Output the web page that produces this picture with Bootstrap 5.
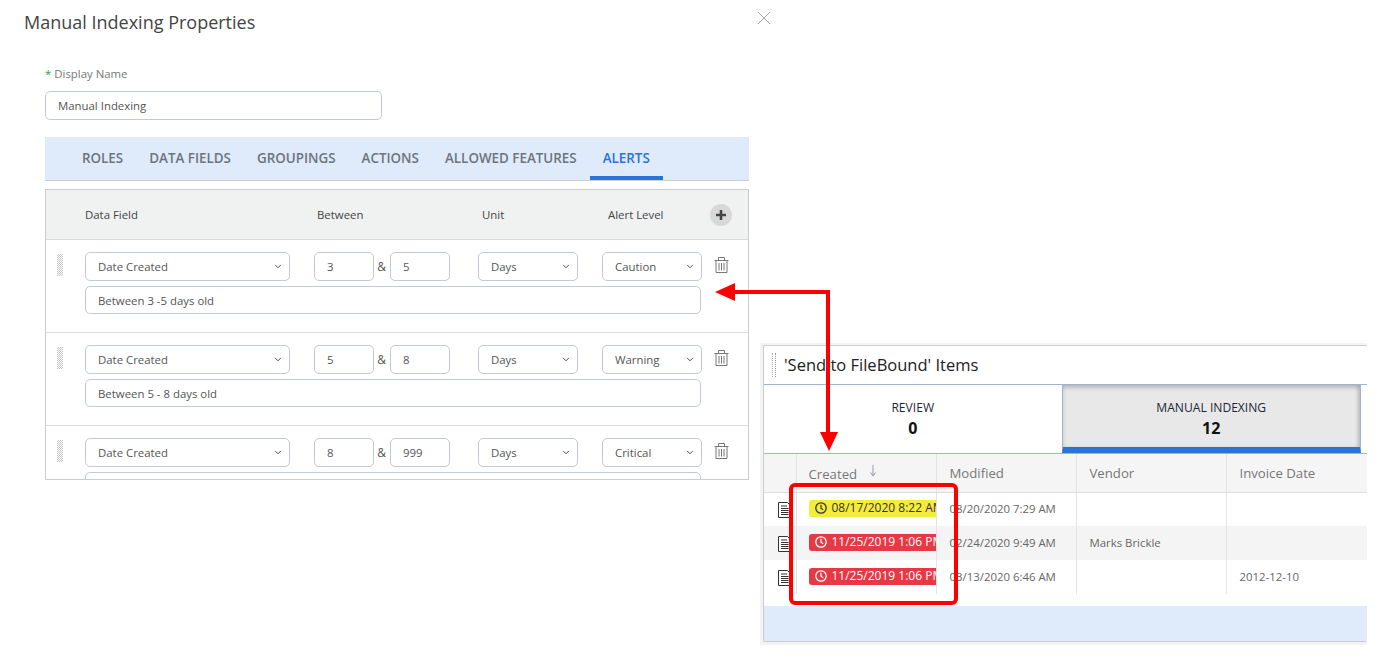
<!DOCTYPE html>
<html lang="en">
<head>
  <meta charset="UTF-8">
  <meta name="viewport" content="width=device-width, initial-scale=1">
  <title>Manual Indexing Properties</title>
  <link href="https://cdn.jsdelivr.net/npm/bootstrap@5.3.2/dist/css/bootstrap.min.css" rel="stylesheet">
  <style>
    body { font-family: "Open Sans", "Liberation Sans", sans-serif; font-size: 12px; color: #555; background: #fff; position: relative; height: 657px; overflow: hidden; }
    .left-pane { width: 760px; flex: none; }
    .dlg-head { height: 44px; padding-left: 24px; }
    .dlg-title { font-size: 18px; line-height: 44px; color: #444; margin: 0; font-weight: 400; }
    .dlg-close { margin: 11px -11px 0 0; }
    .dlg-body { padding-left: 45px; width: 749px; }
    .name-label { margin: 22px 0 9px; line-height: 16px; color: #777; font-size: 11.4px; }
    .name-label span { color: #2a9d4a; }
    .form-control.ctl, .form-select.ctl { font-size: 11.4px; color: #555; height: 29px; min-height: 0; padding: 0 12px; border-color: #c3cad6; border-radius: 5px; box-shadow: none; }
    .form-select.ctl { background-size: 8px 7px; background-position: right 7px center; padding-right: 20px; }
    .name-input { width: 337px; }
    .tab-bar { margin-top: 17px; height: 44px; background: #dfeafb; border-bottom: 1px solid #ccc; padding-left: 24px; }
    .tab-bar .nav-link { color: #6c757d; font-size: 13.4px; font-weight: 600; height: 43px; padding: 12px 13px 0; border-bottom: 4px solid transparent; line-height: 18px; border-radius: 0; }
    .tab-bar .nav-link.active { color: #2a74d8; border-bottom-color: #2a74d8; }
    .alert-grid { margin-top: 8px; height: 291px; border: 1px solid #ccc; overflow: hidden; }
    .alert-head { height: 50px; background: #f0f2f2; border-bottom: 1px solid #ddd; color: #444; font-size: 11.4px; }
    .hd-field { margin-left: 39px; width: 232px; }
    .hd-between { width: 165px; }
    .hd-unit { width: 126px; }
    .hd-level { width: 102px; }
    .plus-btn { width: 22px; height: 22px; border-radius: 50%; background: #d8d8d8; }
    .alert-row { height: 93px; border-bottom: 1px solid #ddd; padding-top: 12px; }
    .drag-col { width: 39px; flex: none; padding: 2px 0 0 11px; }
    .drag-grip { width: 6px; height: 22px; background: repeating-conic-gradient(#c4c4c4 0 25%, #fff 0 50%) 0 0 / 2px 2px; }
    .w-field { width: 205px; flex: none; }
    .w-num { width: 60px; flex: none; }
    .w-opt { width: 100px; flex: none; }
    .amp { width: 16px; text-align: center; flex: none; font-size: 12px; line-height: 29px; padding-right: 1px; }
    .gap-24 { margin-left: 24px; }
    .gap-28 { margin-left: 28px; }
    .trash { margin-left: 12px; margin-top: 5px; }
    .form-control.note-input { width: 616px; height: 28px; margin: 5px 0 0 39px; }
    .right-pane { width: 607px; height: 302px; margin-top: 343px; background: #f3f3f3; padding: 2px 0 3px 3px; flex: none; }
    .items-panel { height: 297px; background: #fff; border: 1px solid #ccc; border-right: 0; border-radius: 2px; overflow: hidden; display: flex; flex-direction: column; }
    .items-title { height: 38px; flex: none; padding-left: 8px; color: #222; font-size: 16.5px; gap: 8px; }
    .items-grip { width: 4px; height: 24px; border-left: 1px dotted #aaa; border-right: 1px dotted #a8a; }
    .count-tabs { height: 70px; flex: none; border-top: 1px solid #9db5d3; border-bottom: 1px solid #9db5d3; padding-right: 6px; }
    .count-tab { flex: 1 1 0; text-align: center; color: #1c2733; font-size: 12.1px; line-height: 16px; padding-top: 15px; }
    .count-tab b { display: block; font-size: 16px; line-height: 24px; color: #111; }
    .count-tab.on { background: #e8e8e8; border-left: 1px solid #9db5d3; border-right: 1px solid #9db5d3; border-bottom: 6px solid #2a74d8; box-shadow: inset 0 3px 4px rgba(0,0,0,.18), inset -3px 0 3px rgba(0,0,0,.1); }
    .item-table { table-layout: fixed; width: 603px; margin: 0; font-size: 11.4px; color: #666; }
    .item-table th, .item-table td { padding: 0 0 1px 13px; border-bottom: 0; border-right: 1px solid #e4e4e4; vertical-align: middle; white-space: nowrap; overflow: hidden; color: #666; background: transparent; box-shadow: none; }
    .item-table th { height: 38px; padding-top: 4px; background: #f5f5f5; border-bottom: 1px solid #ddd; font-weight: 400; font-size: 13.2px; color: #777; }
    .item-table td { height: 34px; }
    .item-table th:nth-child(2), .item-table td:nth-child(2) { padding-left: 12px; padding-bottom: 0; }
    .item-table tr.alt td { background: #f4f4f4; }
    .item-table td.doc-cell { padding: 0 0 0 14px; }
    .item-table td:last-child, .item-table th:last-child { border-right: 0; }
    .alert-pill { display: inline-flex; align-items: center; gap: 5px; height: 17px; width: 150px; padding-left: 6px; border-radius: 3px 0 0 3px; font-size: 12px; }
    .pill-caution { background: #f3ec3d; color: #333; }
    .pill-critical { background: #e63946; color: #fff; }
    .item-foot { margin-top: 12px; height: 36px; flex: none; background: #dfeafb; border-radius: 0 0 0 3px; }
    .overlay { position: absolute; left: 0; top: 0; pointer-events: none; }
  </style>
</head>
<body>
  <div class="d-flex align-items-start">
    <div class="left-pane">
      <div class="dlg-head d-flex justify-content-between align-items-start">
        <h1 class="dlg-title">Manual Indexing Properties</h1>
        <svg class="dlg-close" width="14" height="14" viewBox="0 0 14 14"><path d="M1 1l12 12M13 1L1 13" stroke="#aaa" fill="none"/></svg>
      </div>
      <div class="dlg-body">
        <div class="name-label"><span>*</span> Display Name</div>
        <input class="form-control ctl name-input" value="Manual Indexing">

        <ul class="nav tab-bar">
          <li class="nav-item"><a class="nav-link" href="#">ROLES</a></li>
          <li class="nav-item"><a class="nav-link" href="#">DATA FIELDS</a></li>
          <li class="nav-item"><a class="nav-link" href="#">GROUPINGS</a></li>
          <li class="nav-item"><a class="nav-link" href="#">ACTIONS</a></li>
          <li class="nav-item"><a class="nav-link" href="#">ALLOWED FEATURES</a></li>
          <li class="nav-item"><a class="nav-link active" href="#">ALERTS</a></li>
        </ul>

        <div class="alert-grid">
          <div class="alert-head d-flex align-items-center">
            <div class="hd-field">Data Field</div>
            <div class="hd-between">Between</div>
            <div class="hd-unit">Unit</div>
            <div class="hd-level">Alert Level</div>
            <div class="plus-btn d-flex align-items-center justify-content-center">
              <svg width="12" height="12" viewBox="0 0 12 12"><path d="M6 1v10M1 6h10" stroke="#444" stroke-width="2.6" fill="none"/></svg>
            </div>
          </div>

          <div class="alert-row">
            <div class="d-flex align-items-start">
              <div class="drag-col"><div class="drag-grip"></div></div>
              <select class="form-select ctl w-field"><option>Date Created</option></select>
              <input class="form-control ctl w-num gap-24" value="3">
              <span class="amp">&amp;</span>
              <input class="form-control ctl w-num" value="5">
              <select class="form-select ctl w-opt gap-28"><option>Days</option></select>
              <select class="form-select ctl w-opt gap-24"><option>Caution</option></select>
              <svg class="trash" width="15" height="16" viewBox="0 0 15 16"><path d="M.5 3.500h14M2 3.500V15.500H13V3.500M4.500 3.500V.5h6v3M5 6v7.500M7.500 6v7.500M10 6v7.500" stroke="#777" fill="none"/></svg>
            </div>
            <input class="form-control ctl note-input" value="Between 3 -5 days old">
          </div>

          <div class="alert-row">
            <div class="d-flex align-items-start">
              <div class="drag-col"><div class="drag-grip"></div></div>
              <select class="form-select ctl w-field"><option>Date Created</option></select>
              <input class="form-control ctl w-num gap-24" value="5">
              <span class="amp">&amp;</span>
              <input class="form-control ctl w-num" value="8">
              <select class="form-select ctl w-opt gap-28"><option>Days</option></select>
              <select class="form-select ctl w-opt gap-24"><option>Warning</option></select>
              <svg class="trash" width="15" height="16" viewBox="0 0 15 16"><path d="M.5 3.500h14M2 3.500V15.500H13V3.500M4.500 3.500V.5h6v3M5 6v7.500M7.500 6v7.500M10 6v7.500" stroke="#777" fill="none"/></svg>
            </div>
            <input class="form-control ctl note-input" value="Between 5 - 8 days old">
          </div>

          <div class="alert-row">
            <div class="d-flex align-items-start">
              <div class="drag-col"><div class="drag-grip"></div></div>
              <select class="form-select ctl w-field"><option>Date Created</option></select>
              <input class="form-control ctl w-num gap-24" value="8">
              <span class="amp">&amp;</span>
              <input class="form-control ctl w-num" value="999">
              <select class="form-select ctl w-opt gap-28"><option>Days</option></select>
              <select class="form-select ctl w-opt gap-24"><option>Critical</option></select>
              <svg class="trash" width="15" height="16" viewBox="0 0 15 16"><path d="M.5 3.500h14M2 3.500V15.500H13V3.500M4.500 3.500V.5h6v3M5 6v7.500M7.500 6v7.500M10 6v7.500" stroke="#777" fill="none"/></svg>
            </div>
            <input class="form-control ctl note-input" value="">
          </div>
        </div>
      </div>
    </div>

    <div class="right-pane">
      <div class="items-panel">
        <div class="items-title d-flex align-items-center">
          <div class="items-grip"></div>
          <span>'Send to FileBound' Items</span>
        </div>
        <div class="count-tabs d-flex">
          <div class="count-tab">REVIEW<b>0</b></div>
          <div class="count-tab on">MANUAL INDEXING<b>12</b></div>
        </div>
        <table class="table item-table">
          <colgroup><col style="width:32px"><col style="width:140px"><col style="width:140px"><col style="width:150px"><col></colgroup>
          <thead>
            <tr>
              <th></th>
              <th>Created <svg class="ms-2 align-top" width="8" height="12" viewBox="0 0 8 12"><path d="M4 0v10M1.500 7.500L4 11l2.500-3.500" stroke="#99a" fill="none"/></svg></th>
              <th>Modified</th>
              <th>Vendor</th>
              <th>Invoice Date</th>
            </tr>
          </thead>
          <tbody>
            <tr>
              <td class="doc-cell"><svg width="13" height="16" viewBox="0 0 13 16"><path d="M.5.500h9l3 3v12H.5zM3 4h6M3 6.500h7.500M3 8.500h7.500M3 10.500h7.500M3 12.500h7.500" stroke="#333" fill="#fff"/></svg></td>
              <td><span class="alert-pill pill-caution"><svg width="12" height="12" viewBox="0 0 12 12"><circle cx="6" cy="6" r="5.200" fill="none" stroke="currentColor" stroke-width="1.300"/><path d="M6 2.800V6.300L8.200 7.800" fill="none" stroke="currentColor" stroke-width="1.200"/></svg>08/17/2020 8:22 AM</span></td>
              <td>08/20/2020 7:29 AM</td>
              <td></td>
              <td></td>
            </tr>
            <tr class="alt">
              <td class="doc-cell"><svg width="13" height="16" viewBox="0 0 13 16"><path d="M.5.500h9l3 3v12H.5zM3 4h6M3 6.500h7.500M3 8.500h7.500M3 10.500h7.500M3 12.500h7.500" stroke="#333" fill="#fff"/></svg></td>
              <td><span class="alert-pill pill-critical"><svg width="12" height="12" viewBox="0 0 12 12"><circle cx="6" cy="6" r="5.200" fill="none" stroke="currentColor" stroke-width="1.300"/><path d="M6 2.800V6.300L8.200 7.800" fill="none" stroke="currentColor" stroke-width="1.200"/></svg>11/25/2019 1:06 PM</span></td>
              <td>02/24/2020 9:49 AM</td>
              <td>Marks Brickle</td>
              <td></td>
            </tr>
            <tr>
              <td class="doc-cell"><svg width="13" height="16" viewBox="0 0 13 16"><path d="M.5.500h9l3 3v12H.5zM3 4h6M3 6.500h7.500M3 8.500h7.500M3 10.500h7.500M3 12.500h7.500" stroke="#333" fill="#fff"/></svg></td>
              <td><span class="alert-pill pill-critical"><svg width="12" height="12" viewBox="0 0 12 12"><circle cx="6" cy="6" r="5.200" fill="none" stroke="currentColor" stroke-width="1.300"/><path d="M6 2.800V6.300L8.200 7.800" fill="none" stroke="currentColor" stroke-width="1.200"/></svg>11/25/2019 1:06 PM</span></td>
              <td>03/13/2020 6:46 AM</td>
              <td></td>
              <td>2012-12-10</td>
            </tr>
          </tbody>
        </table>
        <div class="item-foot"></div>
      </div>
    </div>
  </div>

  <!-- annotation drawn over the screenshot -->
  <svg class="overlay" width="1379" height="657" viewBox="0 0 1379 657">
    <path d="M733 292H828V434" fill="none" stroke="#f00" stroke-width="4"/>
    <path d="M715 292L735 283V301Z M820 432H838L829 451Z" fill="#f00"/>
    <rect x="791" y="485" width="165" height="118" rx="4" fill="none" stroke="#f00" stroke-width="4"/>
  </svg>
</body>
</html>
